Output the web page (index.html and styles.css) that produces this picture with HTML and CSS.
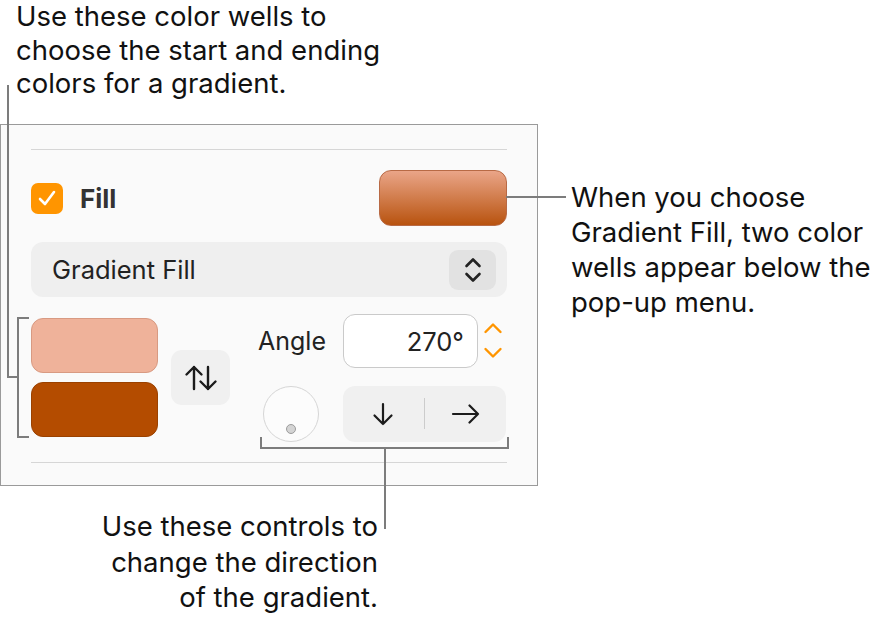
FILE: index.html
```html
<!DOCTYPE html>
<html lang="en">
<head>
    <meta charset="UTF-8">
    <title>Gradient Fill</title>
    <link rel="stylesheet" href="styles.css">
</head>
<body>
    <div class="figure">
        <p class="callout callout-top">Use these color wells to<br>choose the start and ending<br>colors for a gradient.</p>

        <section class="inspector">
            <div class="rule"></div>

            <div class="fill-row">
                <label class="fill-toggle">
                    <span class="checkbox">
                        <svg width="22" height="22" viewBox="0 0 22 22"><path d="M4 12 L9 17 L18 5" fill="none" stroke="#fff" stroke-width="2.6" stroke-linecap="round" stroke-linejoin="round"/></svg>
                    </span>
                    <span class="fill-label">Fill</span>
                </label>
                <div class="well well-gradient"></div>
            </div>

            <div class="popup">
                <span>Gradient Fill</span>
                <span class="popup-stepper">
                    <svg width="18" height="28" viewBox="0 0 18 28"><path d="M2.5 10 L9 3.5 L15.5 10 M2.5 18 L9 24.5 L15.5 18" fill="none" stroke="#222" stroke-width="2.6" stroke-linecap="round" stroke-linejoin="round"/></svg>
                </span>
            </div>

            <div class="gradient-row">
                <div class="wells">
                    <div class="well well-start"></div>
                    <div class="well well-end"></div>
                </div>
                <button class="swap">
                    <svg width="34" height="26" viewBox="0 0 34 26"><path d="M10 24 V2 M2.5 9.5 L10 2 L17.5 9.5 M24 2 V24 M16.5 16.5 L24 24 L31.5 16.5" fill="none" stroke="#1c1c1c" stroke-width="2.4" stroke-linecap="round" stroke-linejoin="round"/></svg>
                </button>
                <div class="direction">
                    <div class="angle-row">
                        <span class="angle-label">Angle</span>
                        <div class="angle-field">270°</div>
                        <span class="angle-stepper">
                            <svg width="20" height="40" viewBox="0 0 20 40"><path d="M2.5 11 L10 3.5 L17.5 11 M2.5 28 L10 35.5 L17.5 28" fill="none" stroke="#ff9500" stroke-width="2.4" stroke-linecap="round" stroke-linejoin="round"/></svg>
                        </span>
                    </div>
                    <div class="dial-row">
                        <div class="dial"><span class="dial-knob"></span></div>
                        <div class="segmented">
                            <span class="seg">
                                <svg width="24" height="24" viewBox="0 0 24 24"><path d="M12 2 V22 M3.5 13.5 L12 22 L20.5 13.5" fill="none" stroke="#1c1c1c" stroke-width="2.2" stroke-linecap="round" stroke-linejoin="round"/></svg>
                            </span>
                            <span class="seg-divider"></span>
                            <span class="seg">
                                <svg width="30" height="20" viewBox="0 0 30 20"><path d="M2 10 H27 M18.5 1.5 L27 10 L18.5 18.5" fill="none" stroke="#1c1c1c" stroke-width="2.2" stroke-linecap="round" stroke-linejoin="round"/></svg>
                            </span>
                        </div>
                    </div>
                </div>
            </div>

            <div class="rule rule-bottom"></div>
        </section>

        <p class="callout callout-right">When you choose<br>Gradient Fill, two color<br>wells appear below the<br>pop-up menu.</p>
        <p class="callout callout-bottom">Use these controls to<br>change the direction<br>of the gradient.</p>

        <!-- leader lines from the callouts to the controls -->
        <svg class="leaders" width="886" height="626" viewBox="0 0 886 626">
            <g fill="none" stroke="#7c7c7c" stroke-width="2">
                <path d="M8 85 V377 H18"/>
                <path d="M29 318 H18 V437 H29"/>
                <path d="M506 197 H566"/>
                <path d="M261 437 V448 H508 V437"/>
                <path d="M385 448 V529"/>
            </g>
        </svg>
    </div>
</body>
</html>
```

FILE: styles.css
```css
body {
    margin: 0;
    background-color: #ffffff;
    font-family: Inter, "Noto Sans", sans-serif;
    color: #111111;
}
.figure {
    position: relative;
    width: 886px;
    height: 626px;
    padding-top: 124px;
    box-sizing: border-box;
}

/* callout text */
.callout {
    position: absolute;
    margin: 0;
    font-size: 27.5px;
    line-height: 35px;
    color: #111111;
    white-space: nowrap;
}
.callout-top {
    left: 16px;
    top: 0;
    line-height: 33.5px;
}
.callout-right {
    left: 571px;
    top: 180px;
}
.callout-bottom {
    right: 508px;
    top: 509px;
    text-align: right;
    line-height: 35.5px;
}
.leaders {
    position: absolute;
    left: 0;
    top: 0;
    pointer-events: none;
}

/* inspector panel */
.inspector {
    width: 538px;
    box-sizing: border-box;
    border: 1px solid #9a9a9a;
    background-color: #fafafa;
    padding: 24px 30px 22px;
    display: flex;
    flex-direction: column;
}
.rule {
    height: 1px;
    background-color: #d6d6d6;
}
.rule-bottom {
    margin-top: 20px;
}
.fill-row {
    margin-top: 20px;
    height: 56px;
    display: flex;
    align-items: center;
    justify-content: space-between;
}
.fill-toggle {
    display: flex;
    align-items: center;
    gap: 17px;
}
.checkbox {
    width: 32px;
    height: 31px;
    border-radius: 7px;
    background-color: #ff9500;
    display: flex;
    align-items: center;
    justify-content: center;
}
.fill-label {
    font-size: 26px;
    font-weight: 700;
    color: #333333;
}
.well {
    box-sizing: border-box;
    border-radius: 12px;
}
.well-gradient {
    width: 128px;
    height: 56px;
    background: linear-gradient(#eaa588, #b8530f);
    border: 1px solid #b86a45;
}
.popup {
    margin-top: 16px;
    height: 55px;
    border-radius: 12px;
    background-color: #efefef;
    display: flex;
    align-items: center;
    justify-content: space-between;
    padding: 0 11px 0 21px;
    font-size: 25.5px;
    color: #222222;
}
.popup-stepper {
    width: 47px;
    height: 40px;
    border-radius: 9px;
    background-color: #e2e2e2;
    display: flex;
    align-items: center;
    justify-content: center;
}

/* start / end colours and direction */
.gradient-row {
    margin-top: 17px;
    display: flex;
    align-items: flex-start;
}
.wells {
    margin-top: 4px;
    width: 127px;
    display: flex;
    flex-direction: column;
    gap: 9px;
}
.wells .well {
    height: 55px;
}
.well-start {
    background-color: #efb29a;
    border: 1px solid #d89a82;
}
.well-end {
    background-color: #b44c00;
    border: 1px solid #9a4100;
}
.swap {
    margin: 36px 0 0 13px;
    width: 59px;
    height: 55px;
    border: none;
    border-radius: 11px;
    background-color: #f0f0f0;
    display: flex;
    align-items: center;
    justify-content: center;
    padding: 0;
}
.direction {
    margin-left: 28px;
    display: flex;
    flex-direction: column;
    gap: 17px;
}
.angle-row {
    height: 54px;
    display: flex;
    align-items: center;
}
.angle-label {
    width: 85px;
    font-size: 25px;
    color: #222222;
}
.angle-field {
    width: 135px;
    height: 54px;
    box-sizing: border-box;
    border: 1.5px solid #cacaca;
    border-radius: 12px;
    background-color: #ffffff;
    display: flex;
    align-items: center;
    justify-content: flex-end;
    padding-right: 13px;
    font-size: 25.5px;
    color: #222222;
}
.angle-stepper {
    margin-left: 5px;
    display: flex;
}
.dial-row {
    height: 57px;
    display: flex;
    align-items: center;
}
.dial {
    margin-left: 5px;
    width: 56px;
    height: 56px;
    box-sizing: border-box;
    border: 1.5px solid #d6d6d6;
    border-radius: 50%;
    background-color: #fcfcfc;
    display: flex;
    justify-content: center;
    align-items: flex-end;
    padding-bottom: 7px;
}
.dial-knob {
    width: 10px;
    height: 10px;
    box-sizing: border-box;
    border-radius: 50%;
    border: 1.5px solid #9c9c9c;
    background-color: #d4d4d4;
}
.segmented {
    margin-left: 24px;
    width: 163px;
    height: 56px;
    border-radius: 12px;
    background-color: #f0f0f0;
    display: flex;
    align-items: center;
}
.seg {
    flex: 1;
    display: flex;
    justify-content: center;
    align-items: center;
}
.seg-divider {
    width: 1.5px;
    height: 31px;
    background-color: #cccccc;
}
```
